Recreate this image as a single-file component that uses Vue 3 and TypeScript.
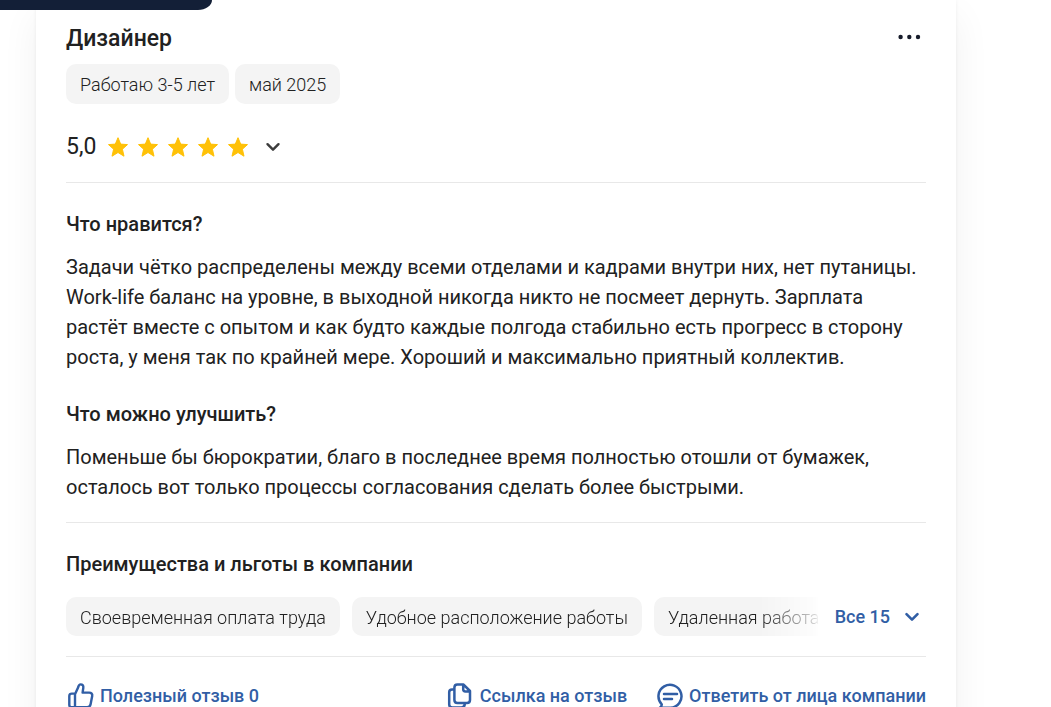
<script setup lang="ts">
import { ref } from 'vue'

interface ReviewSection {
  title: string
  text: string
}

const rating = ref<string>('5,0')
const facts: string[] = ['Работаю 3-5 лет', 'май 2025']
const sections: ReviewSection[] = [
  {
    title: 'Что нравится?',
    text: 'Задачи чётко распределены между всеми отделами и кадрами внутри них, нет путаницы. Work-life баланс на уровне, в выходной никогда никто не посмеет дернуть. Зарплата растёт вместе с опытом и как будто каждые полгода стабильно есть прогресс в сторону роста, у меня так по крайней мере. Хороший и максимально приятный коллектив.',
  },
  {
    title: 'Что можно улучшить?',
    text: 'Поменьше бы бюрократии, благо в последнее время полностью отошли от бумажек, осталось вот только процессы согласования сделать более быстрыми.',
  },
]
const benefits: string[] = ['Своевременная оплата труда', 'Удобное расположение работы', 'Удаленная работа']
const likes = ref<number>(0)
</script>

<template>
  <div class="page">
    <div class="corner-bar"></div>
    <article class="card">
      <header class="head">
        <h2 class="title">Дизайнер</h2>
        <button class="more" type="button" aria-label="Ещё">
          <svg width="24" height="6" viewBox="0 0 24 6" fill="#171c2b">
            <circle cx="2.6" cy="3" r="2.2" />
            <circle cx="11.3" cy="3" r="2.2" />
            <circle cx="20" cy="3" r="2.2" />
          </svg>
        </button>
      </header>

      <div class="facts">
        <span v-for="fact in facts" :key="fact" class="tag">{{ fact }}</span>
      </div>

      <div class="rating">
        <span class="score">{{ rating }}</span>
        <div class="stars">
          <svg v-for="n in 5" :key="n" width="20" height="20" viewBox="0 0 20 20" fill="#ffc107" stroke="#ffc107" stroke-linejoin="round">
            <path d="M10 .7 12.7 7.1 19.5 7.6 14.4 12.2 16 19.2 10 15.5 4 19.2 5.6 12.2.5 7.6 7.3 7.1Z" />
          </svg>
        </div>
        <button class="toggle" type="button" aria-label="Подробнее об оценке">
          <svg width="16" height="10" viewBox="0 0 16 10" fill="none" stroke="#3c3c3c" stroke-width="2.4" stroke-linecap="round" stroke-linejoin="round">
            <path d="M2.5 2.2 8 7.7 13.5 2.2" />
          </svg>
        </button>
      </div>

      <div class="block">
        <section v-for="section in sections" :key="section.title" class="section">
          <h3 class="subtitle">{{ section.title }}</h3>
          <p class="text">{{ section.text }}</p>
        </section>
      </div>

      <section class="block">
        <h3 class="subtitle">Преимущества и льготы в компании</h3>
        <div class="benefits">
          <div class="benefit-list">
            <span v-for="benefit in benefits" :key="benefit" class="tag">{{ benefit }}</span>
          </div>
          <button class="all" type="button">
            Все 15
            <svg width="16" height="10" viewBox="0 0 16 10" fill="none" stroke="currentColor" stroke-width="2.6" stroke-linecap="round" stroke-linejoin="round">
              <path d="M2.5 2.2 8 7.7 13.5 2.2" />
            </svg>
          </button>
        </div>
      </section>

      <footer class="actions">
        <button class="action like" type="button">
          <svg width="28" height="28" viewBox="0 0 28 28" fill="none" stroke="currentColor" stroke-width="2.4" stroke-linecap="round" stroke-linejoin="round">
            <path d="M9 12.3 12.2 5.2C12.7 3.3 13.3 2.4 14.6 2.4 16.6 2.4 17.6 3.8 17.3 5.8L16.6 10.6H23.2C25.4 10.6 26.6 12.2 26.2 14L24.6 22.2C24.2 24.2 23 25.3 21.2 25.3H9M9 11.6V25.3H5.8C4.2 25.3 3.3 24.4 3.3 22.9V14C3.3 12.4 4.2 11.6 5.8 11.6Z" />
          </svg>
          Полезный отзыв {{ likes }}
        </button>
        <button class="action" type="button">
          <svg width="28" height="28" viewBox="0 0 28 28" fill="none" stroke="currentColor" stroke-width="2.5" stroke-linecap="round" stroke-linejoin="round">
            <path d="M11.4 2.6H17.6L24 9V18C24 20 23 21 21 21H11.4C9.4 21 8.4 20 8.4 18V5.6C8.4 3.6 9.4 2.6 11.4 2.6ZM17.2 3V7.2C17.2 8.7 17.9 9.4 19.4 9.4H24M8 7.4H6C4.2 7.4 3.2 8.4 3.2 10.2V22.4C3.2 24.4 4.2 25.4 6.2 25.4H15.4C17.4 25.4 18.6 24.5 18.8 22.2" />
          </svg>
          Ссылка на отзыв
        </button>
        <button class="action" type="button">
          <svg width="28" height="28" viewBox="0 0 28 28" fill="none" stroke="currentColor" stroke-width="2.5" stroke-linecap="round" stroke-linejoin="round">
            <path d="M6.7 22.3A11.5 11.5 0 1 1 15.5 25.8H4.8C6.2 24.8 6.9 23.7 6.7 22.3ZM9 12H22M9 17H17" />
          </svg>
          Ответить от лица компании
        </button>
      </footer>
    </article>
  </div>
</template>

<style>
body {
  margin: 0;
  background: #fff;
}
</style>

<style scoped>
.page {
  min-height: 100vh;
  padding: 0 95px 0 36px;
  overflow: hidden;
  box-sizing: border-box;
  font-family: Roboto, "Liberation Sans", sans-serif;
  color: #212121;
}

.corner-bar {
  position: absolute;
  top: 0;
  left: 0;
  width: 212px;
  height: 10px;
  border-bottom-right-radius: 14px 10px;
  background: #131f37;
}

.card {
  padding: 25px 30px 24px;
  background: #fff;
  box-shadow: 0 0 4px rgba(0, 0, 0, 0.06), 0 16px 36px rgba(0, 0, 0, 0.06);
}

button {
  padding: 0;
  border: 0;
  background: none;
  font: inherit;
  color: inherit;
  cursor: pointer;
}

svg {
  display: block;
  flex: none;
}

.head {
  display: flex;
  align-items: flex-start;
  justify-content: space-between;
}

.title {
  margin: 0;
  font-size: 23px;
  font-weight: 500;
  line-height: 28px;
}

.more {
  padding: 9px 4px;
}

.facts {
  display: flex;
  gap: 6px;
  margin-top: 11px;
}

.tag {
  flex: none;
  padding: 2px 14px 0;
  border-radius: 10px;
  background: #f4f4f4;
  font-size: 18px;
  font-weight: 300;
  line-height: 38px;
  color: #212121;
}

.rating {
  display: flex;
  align-items: center;
  margin-top: 28px;
  padding-bottom: 20px;
}

.score {
  font-size: 23px;
  line-height: 30px;
}

.stars {
  display: flex;
  gap: 10px;
  margin-left: 12px;
}

.toggle {
  margin-left: 17px;
}

.block {
  padding: 26px 0 20px;
  border-top: 1px solid #e8e8e8;
}

.section + .section {
  margin-top: 27px;
}

.subtitle {
  margin: 0;
  font-size: 20px;
  font-weight: 500;
  line-height: 30px;
}

.text {
  margin: 13px 0 0;
  font-size: 20px;
  line-height: 30px;
}

.benefits {
  display: flex;
  align-items: center;
  margin-top: 18px;
}

.benefit-list {
  display: flex;
  flex: 1;
  gap: 12px;
  min-width: 0;
  overflow: hidden;
  mask-image: linear-gradient(to right, #000 calc(100% - 60px), rgba(0, 0, 0, 0.2) calc(100% - 4px), transparent);
}

.benefit-list .tag {
  line-height: 37px;
}

.all {
  display: flex;
  align-items: center;
  gap: 14px;
  padding: 0 6px 0 16px;
  font-size: 18px;
  font-weight: 500;
  line-height: 30px;
  color: #315ea5;
}

.actions {
  display: flex;
  gap: 28px;
  padding-top: 24px;
  border-top: 1px solid #e8e8e8;
}

.action {
  display: flex;
  align-items: center;
  gap: 6px;
  font-size: 18px;
  font-weight: 500;
  line-height: 30px;
  color: #315ea5;
}

.like {
  margin-right: auto;
}
</style>
